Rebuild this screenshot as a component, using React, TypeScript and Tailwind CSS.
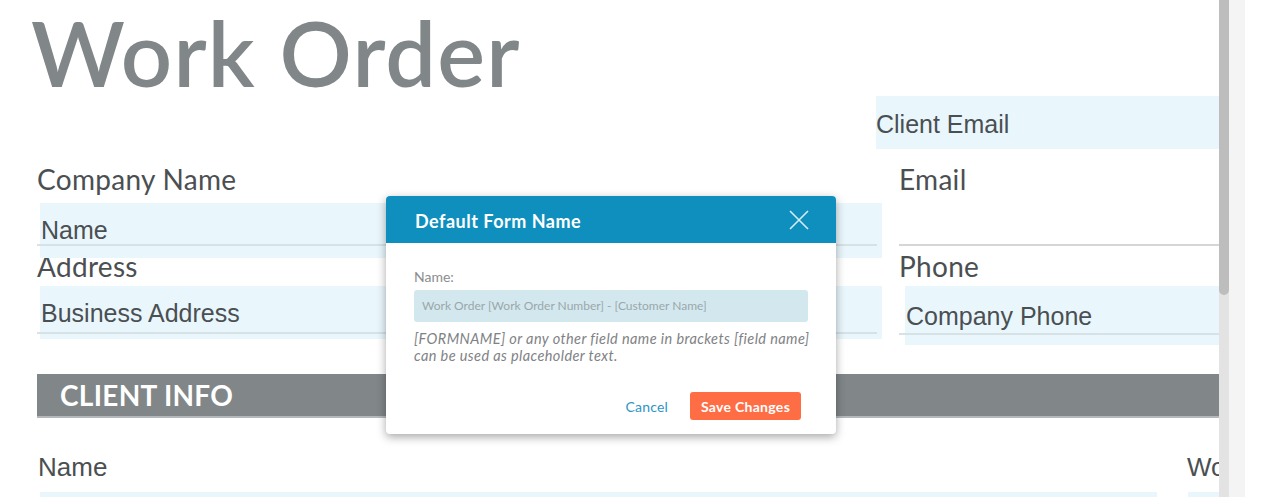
const label = "font-['Lato','Noto_Sans',sans-serif] text-[28px] leading-none h-[28px] text-[#4b4f52] tracking-[0.3px] whitespace-nowrap"
const field = "font-['Liberation_Sans',Arial,sans-serif] text-[25px] leading-none text-[#4b4f52] whitespace-nowrap"

function FieldBox({ text, className = '', pad = 'pt-[15px]', line = 'left-[-3px] right-[5px] bottom-[12px]' }: { text: string; className?: string; pad?: string; line?: string }) {
  return (
    <div className={`relative bg-[#e9f7fd] ${pad} ${className}`}>
      <span className={`${field} block pl-[1px]`}>{text}</span>
      <div className={`absolute h-[2px] bg-[#d6e2e6] ${line}`} />
    </div>
  )
}

function Modal() {
  return (
    <div className="absolute left-[386px] top-[196px] w-[450px] rounded-[4px] bg-white shadow-[0_3px_10px_rgba(0,0,0,0.35)] overflow-hidden font-['Lato','Noto_Sans',sans-serif]">
      <div className="h-[47px] bg-[#0e8fbd] flex items-center justify-between pl-[29px] pr-[27px]">
        <span className="pt-[3px] text-white text-[18px] font-bold tracking-[0.5px]">Default Form Name</span>
        <svg width="20" height="20" viewBox="0 0 20 20" className="mt-[1px]">
          <path d="M1 1 L19 19 M19 1 L1 19" stroke="#d4edf6" strokeWidth="1.6" fill="none" />
        </svg>
      </div>
      <div className="px-[28px] pt-[27px] pb-[14px]">
        <div className="text-[14px] text-[#8a8d8f] leading-none">Name:</div>
        <div className="mt-[6px] h-[32px] rounded-[3px] bg-[#d3e8ee] flex items-center px-[8px] text-[12px] text-[#9aa7ab]">
          Work Order [Work Order Number] - [Customer Name]
        </div>
        <p className="mt-[8px] text-[14.5px] italic text-[#7f8285] leading-[17px] tracking-[0.4px] whitespace-nowrap">
          [FORMNAME] or any other field name in brackets [field name]
          <br />
          can be used as placeholder text.
        </p>
        <div className="mt-[28px] flex items-center justify-end gap-[22px] pr-[7px]">
          <button className="text-[14px] text-[#2e95c5] tracking-[0.2px]">Cancel</button>
          <button className="h-[28px] w-[111px] rounded-[3px] bg-[#ff6d45] text-white text-[14px] font-bold tracking-[0.3px]">
            Save Changes
          </button>
        </div>
      </div>
    </div>
  )
}

export default function App() {
  return (
    <div className="w-[1266px] h-[497px] overflow-hidden flex bg-white relative">
      <div className="w-[1219px] shrink-0 overflow-hidden">
        <div className="h-[96px]">
          <h1 className="pl-[31px] pt-[7px] font-['Lato','Noto_Sans',sans-serif] font-semibold text-[90px] leading-none text-[#818689] tracking-[1.2px] whitespace-nowrap">
            Work Order
          </h1>
        </div>

        <div className="flex">
          <div className="w-[876px]" />
          <div className="flex-1 h-[53px] bg-[#e9f7fd] pt-[16px]">
            <span className={field}>Client Email</span>
          </div>
        </div>

        <div className="flex items-start">
          <div className="w-[882px] pl-[37px] flex flex-col">
            <div className={`${label} mt-[16px]`}>Company Name</div>
            <FieldBox text="Name" className="ml-[3px] h-[55px] mt-[10px]" />
            <div className={`${label} -mt-[6px]`}>Address</div>
            <FieldBox text="Business Address" className="ml-[3px] h-[53px] mt-[6px]" line="left-[-3px] right-[5px] bottom-[5px]" />
          </div>
          <div className="flex-1 pl-[17px] flex flex-col">
            <div className={`${label} mt-[16px]`}>Email</div>
            <div className="h-[53px] border-b-2 border-[#d6d6d6]" />
            <div className={`${label} mt-[6px]`}>Phone</div>
            <FieldBox text="Company Phone" className="ml-[6px] h-[59px] mt-[6px]" pad="pt-[18px]" line="left-[-6px] right-0 bottom-[10px]" />
          </div>
        </div>

        <div className="mt-[29px] ml-[37px] h-[44px] bg-[#818689] border-b-2 border-[#b4b8ba] flex items-center pl-[23px]">
          <span className="font-['Lato','Noto_Sans',sans-serif] font-bold text-[28px] text-white tracking-[0.3px] leading-none">
            CLIENT INFO
          </span>
        </div>

        <div className="flex mt-[36px]">
          <div className="w-[1157px] pl-[38px]">
            <div className={`${field} text-[26px] h-[28px]`}>Name</div>
            <div className="mt-[10px] ml-[2px] h-[40px] bg-[#e9f7fd]" />
          </div>
          <div className="flex-1 pl-[30px] overflow-hidden">
            <div className={`${field} text-[26px] h-[28px]`}>Work</div>
            <div className="mt-[10px] ml-[1px] h-[40px] bg-[#e9f7fd]" />
          </div>
        </div>
      </div>

      <div className="w-[10px] shrink-0 bg-[#e3e3e3] flex flex-col">
        <div className="h-[295px] bg-[#bdbdbd] rounded-b-[5px]" />
      </div>
      <div className="w-[16px] shrink-0 bg-[#f4f4f4]" />

      <Modal />
    </div>
  )
}
